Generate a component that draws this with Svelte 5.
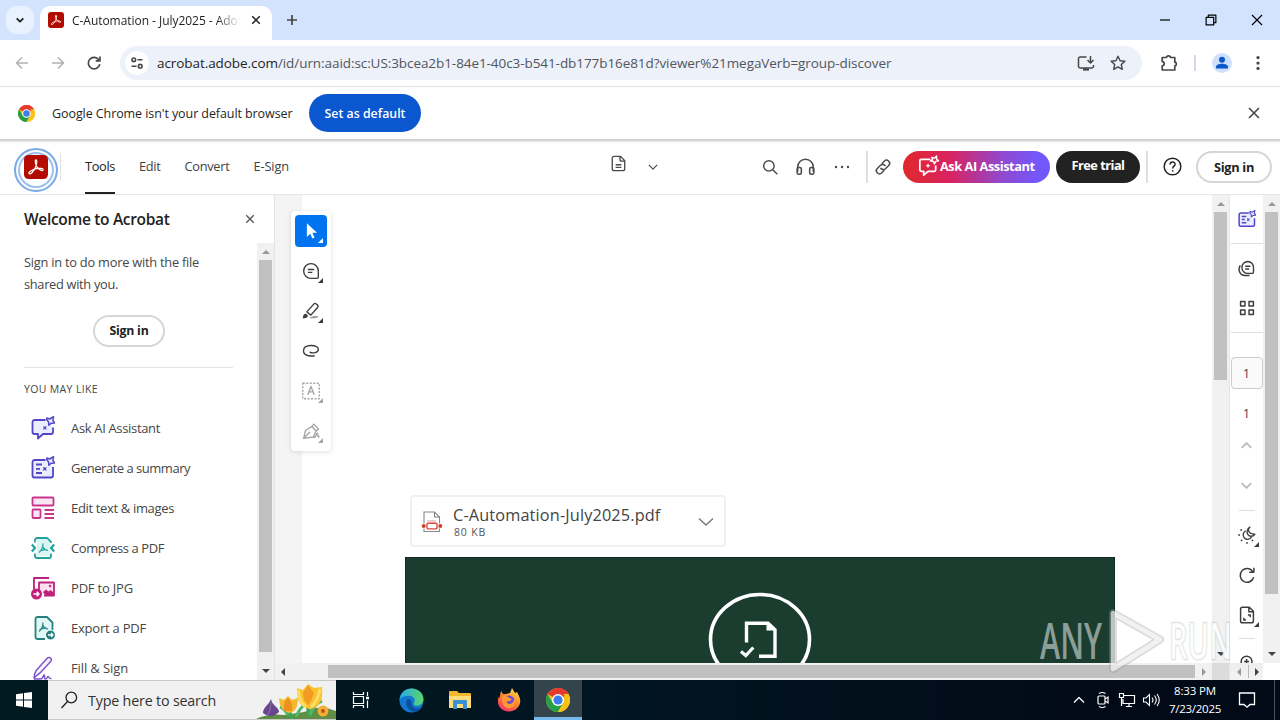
<script>
  // Tunes letter spacing so a label occupies the given width in pixels.
  function fit(node, width) {
    const natural = node.getBoundingClientRect().width;
    const count = [...node.textContent].length;
    node.style.letterSpacing = (width - natural) / count + 'px';
  }

  const chromeLogo =
    '<circle cx="12" cy="12" r="12" fill="#fbc116"/><path d="M12 12L1.6 6A12 12 0 0 1 22.4 6z" fill="#e33b2e"/><path d="M12 0a12 12 0 0 1 10.4 6H12z" fill="#e33b2e"/><path d="M1.6 6A12 12 0 0 0 12 24l5.2-9L12 12 6.8 15z" fill="#269f4b"/><path d="M12 24l5.2-9a6 6 0 0 0 0-9h5.2A12 12 0 0 1 12 24z" fill="#fbc116"/><circle cx="12" cy="12" r="6" fill="#fff"/><circle cx="12" cy="12" r="4.6" fill="#3b7ded"/>';
  const acrobat =
    '<rect width="24" height="24" rx="4.5" fill="#b30b00"/><path d="M5 18.5c-.8-1.5 4-4.200 7.500-4.800 3-.6 6.800-.5 6.600 1.200-.3 1.600-4-.2-6-2.800-1.500-2-2.600-6.600-1.300-7.200 1.500-.5 1.200 4-.5 7.800C9.500 16.500 6.200 20.300 5 18.500z" fill="none" stroke="#fff" stroke-width="1.250"/>';

  const icons = {
    chevDown: '<path d="M7 9.500l5 5 5-5"/>',
    chevUp: '<path d="M7 14.500l5-5 5 5"/>',
    close: '<path d="M7 7l10 10M17 7L7 17"/>',
    plus: '<path d="M12 7v10M7 12h10"/>',
    back: '<path d="M18 12H6.500M12 6.500L6.500 12l5.500 5.500"/>',
    fwd: '<path d="M6 12h11.500M12 6.500l5.500 5.500-5.500 5.500"/>',
    reload: '<path d="M17 9a5.800 5.800 0 1 0 .8 4.200"/><path d="M18 5.500v4.300h-4.300"/>',
    tune: '<circle cx="8.500" cy="8.500" r="2"/><path d="M12.500 8.500H18M6 15.500h5.500"/><circle cx="15.500" cy="15.500" r="2"/>',
    install: '<path d="M12.500 6H6.200A1.700 1.700 0 0 0 4.500 7.700v7.600A1.700 1.700 0 0 0 6.200 17h11.600a1.700 1.700 0 0 0 1.700-1.700V14M16.500 5v6.500M13.500 9l3 3 3-3"/><path d="M9 18.500h6" stroke-width="2.200"/>',
    starline: '<path d="M12 5.200l2.100 4.500 4.800.5-3.600 3.300 1 4.900-4.300-2.500-4.300 2.500 1-4.900-3.600-3.300 4.800-.5z"/>',
    puzzle: '<path d="M5.200 6.500h4.300c0-2.200 4-2.200 4 0h4.300v4.700c2 0 2 3.600 0 3.600v4.200H5.200v-4.200c2.700-.3 2.700-3.800 0-4.100z"/>',
    kebab: '<g fill="currentColor" stroke="none"><circle cx="12" cy="7" r="1.500"/><circle cx="12" cy="12" r="1.500"/><circle cx="12" cy="17" r="1.500"/></g>',
    dots: '<g fill="currentColor" stroke="none"><circle cx="6" cy="12" r="1.200"/><circle cx="12" cy="12" r="1.200"/><circle cx="18" cy="12" r="1.200"/></g>',
    min: '<path d="M7 12h10"/>',
    restore: '<path d="M7.500 9.500h7v7h-7zM9.500 9.500v-2h7v7h-2"/>',
    doc: '<path d="M7.500 4.500h6.500l4.500 4.500v8.500a2 2 0 0 1-2 2h-9a2 2 0 0 1-2-2v-11a2 2 0 0 1 2-2zM13.500 4.500v3a2 2 0 0 0 2 2h3M9 13.300h6M9 16h6"/>',
    search: '<circle cx="10.800" cy="10.800" r="5.700"/><path d="M15 15l5 5"/>',
    phones: '<path d="M4.500 17v-4.500a7.500 7.500 0 0 1 15 0V17"/><rect x="4" y="13" width="4" height="6.500" rx="1.500"/><rect x="16" y="13" width="4" height="6.500" rx="1.500"/>',
    link: '<g transform="rotate(-45 12 12)"><path d="M10.500 15.500H6.500a3.400 3.400 0 0 1 0-6.800h5a3.400 3.400 0 0 1 3 4.500M13.500 8.500H17.500a3.400 3.400 0 0 1 0 6.800h-5a3.400 3.400 0 0 1-3-4.500"/></g>',
    help: '<circle cx="12" cy="12" r="8"/><path d="M9.700 10c0-3.200 4.800-3.100 4.800-.2 0 1.900-2.300 1.900-2.300 4"/><circle cx="12.200" cy="16.200" r=".8" fill="currentColor" stroke="none"/>',
    aiWhite: '<path d="M14 4.500H4.500A1.500 1.500 0 0 0 3 6v9.500A1.500 1.500 0 0 0 4.500 17H7v4l4.500-4h6.500a1.500 1.500 0 0 0 1.500-1.500V11"/><path d="M15.500 2.500l2.500.8L20.500 1l-.2 3.200 2.200 1.800-3 .7-1.300 2.600-1.200-2.700-3-.3 2.200-1.600z" stroke-width="1.500"/><path d="M11.500 8.700l.8 1.700 1.700.8-1.700.8-.8 1.700-.8-1.700-1.700-.8 1.700-.8z" fill="currentColor" stroke="none"/>',
    ai: '<path d="M14.500 4H3.500A2 2 0 0 0 1.500 6v10a2 2 0 0 0 2 2H7v4.500L12 18h8a2 2 0 0 0 2-2v-4.500" fill="#ececff"/><path d="M16 2l2.600 1L22.500.700l-.6 3.800 2 2.500-3.500.2-2.600 2-.2-3.200-2-2.500z" fill="#ececff" stroke-width="1.500"/><path d="M12.300 10l1.700.8 1.700-.8-.7 1.900.7 1.800-1.800-.7-1.900.7.7-1.900z" fill="currentColor" stroke="none"/>',
    summary: '<path d="M14.500 4H3.500A2 2 0 0 0 1.500 6v13.500a2 2 0 0 0 2 2H20a2 2 0 0 0 2-2V11" fill="#ececff"/><path d="M16 2l2.600 1L22.500.700l-.6 3.800 2 2.500-3.500.2-2.600 2-.2-3.200-2-2.500z" fill="#ececff" stroke-width="1.500"/><path d="M5 8.500h6M5 12.800h4M5 17h6"/><path d="M12 10.800l1.900.9 1.800-.9-.7 2.100.7 2-1.900-.8-2.100.8.8-2z" fill="currentColor" stroke="none"/>',
    edit: '<g fill="#fce6f3"><rect x="1.500" y="1.500" width="21" height="8" rx="1"/><rect x="1.500" y="13.500" width="8" height="8.500" rx="1"/></g><path d="M13.500 14h9.500M13.500 18h9.500M13.500 22h9.500"/>',
    compress: '<path d="M4 6.500V4A2.500 2.500 0 0 1 6.500 2H16l4 4v1M4 17.500V20a2 2 0 0 0 2 2h12a2 2 0 0 0 2-2v-2.500"/><path d="M6 3h10l3 4v13H6z" fill="#daf6f3" stroke="none"/><path d="M.8 8.500L4 12 .8 15.500M23.200 8.500L20 12l3.200 3.500" stroke-width="2.200"/><path d="M8 16.500c2.500-2 4-5 4-9M12 11c.8 2 2.500 3.200 5 3.500M8.500 15.500c2-1.500 5-2.300 8-1.500" stroke-width="1.200"/>',
    jpg: '<path d="M3 14V2h15"/><path d="M8 15V6.500h15v13H13" fill="#fce0f1"/><path d="M12 16l3-2.500 2.500 2 2-1.500 3 2.500v3h-8z" fill="currentColor" stroke="none"/><circle cx="19" cy="10" r="1.200" fill="currentColor" stroke="none"/><circle cx="5.500" cy="18" r="5.500" fill="currentColor" stroke="none"/><path d="M2.500 18h5M5.700 15.700L8 18l-2.300 2.300" stroke="#fff" stroke-width="1.500"/>',
    export: '<path d="M14 23H6.500a2 2 0 0 1-2-2V3a2 2 0 0 1 2-2H16l5.500 5.500V14" fill="#e0f7f6"/><path d="M8 15.500c2.500-2 4-5 4-9M12 9.500c.8 2 2.500 3.200 5 3.500M8.500 14c2-1.500 5-2.300 8-1.500" stroke-width="1.200"/><circle cx="19.500" cy="19" r="5" fill="currentColor" stroke="#fff" stroke-width="1"/><path d="M17 19h4.500M20 17l2 2-2 2" stroke="#fff" stroke-width="1.300"/>',
    sign: '<g stroke-width="1.400"><path d="M3 22c.4-4 1.200-6.500 3-8.500L16 2.500c1-1.200 2.600-1.200 3.500-.4 1 .9 1.200 2.300.2 3.500L9.500 16.500C8 18.200 5 19.500 3 22z" fill="#f6f2ff"/><path d="M3 23h6c4 0 2.500-4 4-4s-.5 4 1.500 4 1.500-2.500 2.500-2.500.5 2.500 3.500 2"/></g>',
    cursor: '<path d="M7.500 3.500v15l3.700-3.600 2.300 5.400 2.400-1-2.300-5.300h5z" fill="#fff" stroke="none"/>',
    comment: '<path d="M12 4a8 8 0 1 0 0 16h6.500a1.500 1.500 0 0 0 1.500-1.500V12a8 8 0 0 0-8-8zM8.500 10.300h7M8.500 13.500h5"/>',
    pen: '<path d="M7.500 13L15 4.500c.8-.9 2-.9 2.800-.2l1.200 1c.9.8 1 2 .2 2.900L11.800 16.500z"/><path d="M3 20c.2-2.600.8-4.300 2.500-5 2 .1 3.200 1.400 3 3-1.200 1.700-3.200 2-5.500 2z" fill="currentColor" stroke="none"/><path d="M10 19.500c4-2.200 8-2.500 10.500-1.500-1.500 2-6.500 2.300-10.500 1.500z" fill="#9a9a9a" stroke="none"/>',
    lasso: '<path d="M4 11C4 4.500 20 4.500 20 10c0 4-6 5-9.500 3.200M4 11c-1 4.500 4 7.300 12 6.200"/>',
    textbox: '<rect x="3" y="3.500" width="18" height="17" stroke-dasharray="2.200 1.600"/><path d="M8.500 16L12 7l3.500 9M9.800 13h4.400"/>',
    fountain: '<path d="M4 20l2-8.500 7-4.500 4.500 5-3 6.500zM4 20l7-7M13 7l2.200-2.500 5 5.500-2.700 2M15 19c2.500 1 2.500-5 4-4.500s-1 5 2.500 3.500"/>',
    comments: '<path d="M13.500 4a6.800 6.800 0 1 0 0 13.600h5.300a1.200 1.200 0 0 0 1.200-1.200V10.800A6.700 6.700 0 0 0 13.500 4zM10.500 9.500h6M10.500 12.500h4.500M4.800 8.500c-3.300 5.500 0 11.500 5.200 11.500h5.500"/>',
    grid: '<rect x="5" y="5" width="4.800" height="4.800"/><rect x="14.200" y="5" width="4.800" height="4.800"/><rect x="5" y="14.200" width="4.800" height="4.800"/><rect x="14.200" y="14.200" width="4.800" height="4.800"/>',
    sun: '<path d="M10.500 7A5.300 5.300 0 1 0 17.500 14M15.500 2.500c-3.500 2.500-2 9 6 8.500-1.600 3-6.500 3.400-8.400.5C11 8.500 12.500 4 15.500 2.500z"/><g fill="currentColor" stroke="none"><circle cx="2.500" cy="12" r="1.100"/><circle cx="5" cy="6" r="1.100"/><circle cx="5.500" cy="18.500" r="1.100"/><circle cx="12" cy="21.500" r="1.100"/><circle cx="18.500" cy="18.500" r="1.100"/></g>',
    rotate: '<path d="M18.500 8.500a7.500 7.500 0 1 0 .8 6M19.500 4v5h-5"/>',
    page: '<path d="M7 3.500h7.500L19 8v10.500a2 2 0 0 1-2 2H7a2 2 0 0 1-2-2v-13a2 2 0 0 1 2-2zM14 3.500V8.500h5M13 12h2.500v2.500M11 17.500H8.500V15"/>',
    zoomin: '<circle cx="11.500" cy="11.500" r="6.500"/><path d="M8.500 11.500h6M11.500 8.500v6M16 16l4 4"/>'
  };

  const suggestions = [
    ['ai', 'Ask AI Assistant', 89, '#5146c8'],
    ['summary', 'Generate a summary', 119, '#5146c8'],
    ['edit', 'Edit text & images', 103, '#c9348d'],
    ['compress', 'Compress a PDF', 93, '#1fa39d'],
    ['jpg', 'PDF to JPG', 62, '#bf227a'],
    ['export', 'Export a PDF', 75, '#26807f'],
    ['sign', 'Fill & Sign', 57, '#7a52c8']
  ];
  const tools = [
    ['cursor', true, ''],
    ['comment', true, ''],
    ['pen', true, ''],
    ['lasso', false, ''],
    ['textbox', true, 'off'],
    ['fountain', true, 'off']
  ];
  const menu = [['Tools', 30], ['Edit', 21.500], ['Convert', 45], ['E-Sign', 35.500]];
</script>

{#snippet icon(name, size = 24, stroke = 1.5)}
  <svg width={size} height={size} viewBox="0 0 24 24" fill="none" stroke="currentColor" stroke-width={stroke} stroke-linejoin="round">{@html icons[name]}</svg>
{/snippet}

{#snippet logo(art, size)}
  <svg width={size} height={size} viewBox="0 0 24 24">{@html art}</svg>
{/snippet}

{#snippet arrow(dir, dim = false)}
  <i class="arrow {dir}" class:dim></i>
{/snippet}

<div class="screen">
  <div class="tabs">
    <div class="tabsearch">{@render icon('chevDown', 16, 2.600)}</div>
    <div class="tab">
      {@render logo(acrobat, 16)}
      <span class="tabtitle"><span use:fit={173}>C-Automation - July2025 - Adob</span></span>
      <span class="c">{@render icon('close', 18, 2)}</span>
    </div>
    <span class="plus">{@render icon('plus', 24, 1.700)}</span>
    <div class="winbtns">
      <span>{@render icon('min', 24, 1.200)}</span>
      <span>{@render icon('restore', 26, 1.100)}</span>
      <span>{@render icon('close', 24, 1.200)}</span>
    </div>
  </div>

  <div class="toolbar">
    <div class="nav">
      <span class="faded">{@render icon('back')}</span>
      <span class="faded">{@render icon('fwd')}</span>
      <span>{@render icon('reload', 24, 1.700)}</span>
    </div>
    <div class="omni">
      <span class="site">{@render icon('tune', 22, 1.700)}</span>
      <span class="url" use:fit={734.500}>acrobat.adobe.com<em>/id/urn:aaid:sc:US:3bcea2b1-84e1-40c3-b541-db177b16e81d?viewer%21megaVerb=group-discover</em></span>
      <span class="omniicons">{@render icon('install')}{@render icon('starline', 24, 1.400)}</span>
    </div>
    <span class="puz">{@render icon('puzzle', 24, 1.700)}</span>
    <span class="sep"></span>
    <span class="avatar"><svg width="20" height="20" viewBox="0 0 20 20"><circle cx="10" cy="6.700" r="3" fill="#0b57d0" /><path d="M4 15.500v-1.500c0-4.200 12-4.200 12 0v1.500z" fill="#0b57d0" /></svg></span>
    <span class="keb">{@render icon('kebab', 26)}</span>
  </div>

  <div class="infobar">
    {@render logo(chromeLogo, 17)}
    <span class="infotext" use:fit={240.500}>Google Chrome isn't your default browser</span>
    <button class="default"><span use:fit={81}>Set as default</span></button>
    <span class="infoclose">{@render icon('close', 24, 1.600)}</span>
  </div>

  <header>
    <div class="ring">{@render logo(acrobat, 24)}</div>
    <i class="ringline"></i>
    <nav>
      {#each menu as [label, w], i}
        <span class="menuitem" class:active={i === 0} style="width:{w}px"><b use:fit={w}>{label}</b></span>
      {/each}
    </nav>
    <span class="docicon">{@render icon('doc', 23, 1.400)}</span>
    <span class="docchev">{@render icon('chevDown', 20, 1.500)}</span>
    <div class="acts">
      {@render icon('search', 22, 1.600)}
      {@render icon('phones', 25, 1.500)}
      {@render icon('dots', 24)}
    </div>
    <span class="vline"></span>
    <span class="linkicon">{@render icon('link', 22, 1.600)}</span>
    <button class="aibtn">{@render icon('aiWhite', 23, 1.800)}<span use:fit={94.500}>Ask AI Assistant</span></button>
    <button class="trial"><span use:fit={53}>Free trial</span></button>
    <span class="vline v2"></span>
    <span class="help">{@render icon('help', 25, 1.400)}</span>
    <button class="signin"><span use:fit={40}>Sign in</span></button>
  </header>

  <main>
    <aside>
      <div class="asidehead"><h2 use:fit={145.500}>Welcome to Acrobat</h2>{@render icon('close', 18, 1.800)}</div>
      <div class="asiderow">
        <div class="asidebody">
          <p><span use:fit={175}>Sign in to do more with the file</span><br /><span use:fit={94}>shared with you.</span></p>
          <button class="signin small"><span use:fit={39}>Sign in</span></button>
          <hr />
          <h3><span use:fit={74}>YOU MAY LIKE</span></h3>
          {#each suggestions as [name, label, w, color]}
            <div class="sug"><span class="sugicon" style="color:{color}">{@render icon(name, 24, 1.800)}</span><span class="suglabel" use:fit={w}>{label}</span></div>
          {/each}
        </div>
        <div class="vbar">{@render arrow('up', true)}<i class="thumb a"></i>{@render arrow('down')}</div>
      </div>
    </aside>

    <section class="viewer">
      <div class="docrow">
        <div class="canvas">
          <div class="paper">
            <div class="attach">
              <svg class="file" width="22" height="24" viewBox="0 0 22 24" fill="none"><path d="M3 21.500V2h10.500l5 5v14.500z" stroke="#888" stroke-width="1.100" /><path d="M13.500 2v5h5" stroke="#777" /><path d="M6 11h9" stroke="#e29c93" /><rect x="1.500" y="13.500" width="19" height="5" fill="#fff" /><rect x="6" y="13.300" width="10" height="5.600" rx="1" stroke="#d64b38" stroke-width="1.400" /><circle cx="2.700" cy="16" r="2" fill="#cf3f2c" /><circle cx="19.300" cy="16" r="2" fill="#cf3f2c" /></svg>
              <div class="names"><span class="fname"><span use:fit={207.500}>C-Automation-July2025.pdf</span></span><span class="fsize"><span use:fit={32}>80 KB</span></span></div>
              <svg class="drop" width="18" height="12" viewBox="0 0 18 12" fill="none" stroke="#777" stroke-width="1.400"><path d="M2 2.500l7 6.500 7-6.500" /></svg>
            </div>
            <div class="banner">
              <svg width="104" height="72" viewBox="0 0 104 72" fill="none" stroke="#fff"><ellipse cx="52" cy="47.500" rx="49.500" ry="45" stroke-width="3.600" /><path d="M38.500 50.500V31.200h21.500l7 6.500v26.600H51" stroke-width="3.400" /><path d="M58.500 30v8.500H68z" fill="#fff" stroke="none" /><path d="M33 59.500l4.800 4 7.500-8" stroke-width="3.200" /></svg>
            </div>
          </div>
        </div>
        <div class="vbar">{@render arrow('up', true)}<i class="thumb b"></i>{@render arrow('down')}</div>
      </div>
      <div class="hbar">{@render arrow('left')}<i class="hthumb"></i>{@render arrow('right', true)}</div>
      <div class="palette">
        {#each tools as [name, corner, cls], i}
          <span class="tool {cls}" class:on={i === 0}>{@render icon(name, 22, 1.500)}{#if corner}<i class="corner"></i>{/if}</span>
        {/each}
      </div>
    </section>

    <div class="side">
      <div class="rail">
        <span class="cell first" style="color:#5146c8">{@render icon('summary', 18, 2)}</span>
        <hr />
        <span class="cell c2">{@render icon('comments', 21, 1.600)}</span>
        <span class="cell c3">{@render icon('grid', 22, 1.600)}</span>
        <hr />
        <span class="pagebox">1</span>
        <span class="pagenum">1</span>
        <span class="cell light">{@render icon('chevUp', 23, 2)}</span>
        <span class="cell light">{@render icon('chevDown', 23, 2)}</span>
        <hr class="short" />
        <span class="cell c4">{@render icon('sun', 20, 1.600)}<i class="corner"></i></span>
        <span class="cell">{@render icon('rotate', 22, 1.600)}</span>
        <span class="cell">{@render icon('page', 22, 1.600)}<i class="corner"></i></span>
        <hr class="short s2" />
        <span class="cell last">{@render icon('zoomin', 20, 1.800)}</span>
      </div>
      <div class="minibar">{@render arrow('left', true)}<i class="tick"></i>{@render arrow('right')}</div>
    </div>
    <div class="vbar outer">{@render arrow('up', true)}<i class="thumb o"></i>{@render arrow('down')}</div>
  </main>

  <footer>
    <span class="start"><svg width="16" height="16" viewBox="0 0 16 16" fill="#fff"><path d="M0 2.300l7-1v6.200H0zM8 1.100L16 0v7.500H8zM0 8.500h7v6.200l-7-1zM8 8.500h8V16l-8-1.100z" /></svg></span>
    <div class="search">
      <svg width="18" height="18" viewBox="0 0 18 18" fill="none" stroke="#222" stroke-width="1.300"><circle cx="11.300" cy="6.500" r="5.300" /><path d="M7.500 10.500L1.500 17" /></svg>
      <span class="hint" use:fit={128}>Type here to search</span>
      <svg class="flowers" width="80" height="38" viewBox="0 0 80 38">
        <path d="M0 38q12-6 28-4l20-3 12-4q10-1 20 3v8z" fill="#5f8d43" />
        <path d="M36 38L32 28M54 36L51 22" stroke="#3aa657" stroke-width="4" />
        <path d="M40 36q4-10 10-13M54 34q4-11 12-14M32 34q-4-7-8-8" stroke="#4fb767" stroke-width="3" fill="none" />
        <path d="M15 18c1 7 8 8 8 13q-8 8-16 1c0-6 6-8 8-14z" fill="#68478d" /><path d="M15 21q0 9-4 14" stroke="#8d70b0" fill="none" />
        <path d="M23 17l5 2 4-4 4 4 6-2q0 14-9 15-10-3-10-15z" fill="#f6b92b" /><path d="M28 30q-1-10 4-13 5 4 4 13z" fill="#ec9120" />
        <path d="M41 7l6 2 5-6 6 4 8-1q2 20-12 22Q40 26 41 7z" fill="#fcc22d" /><path d="M47 12l5-8 6 8-3 8-3 4-4-5z" fill="#f09b22" /><path d="M42 9q2 13 8 17M64 8q-2 12-9 18" stroke="#ffdc65" stroke-width="3" fill="none" />
        <circle cx="67" cy="30" r="5.500" fill="#f3ae35" /><circle cx="67" cy="30" r="2" fill="#b7541b" />
      </svg>
    </div>
    <div class="apps">
      <span><svg width="18" height="18" viewBox="0 0 18 18" fill="none" stroke="#fff" stroke-width="1.200"><path d="M1.500 1v2.500h10V1M1.500 17v-2.500h10V17M1.500 5.500h10v7h-10zM15.500 1v4M15.500 9.500V17" /><path d="M14 7h3" stroke-width="2.500" /></svg></span>
      <span class="edge">
        <svg width="25" height="25" viewBox="0 0 24 24"><defs><linearGradient id="eg" x1="0" x2="1"><stop offset="0" stop-color="#27a9e8" /><stop offset="1" stop-color="#5bd56b" /></linearGradient></defs><circle cx="12" cy="12" r="11.500" fill="#1177cf" /><path d="M.5 12C.500 5 6 .5 12 .5c7 0 11.500 5 11.500 10 0 4-3 6.500-6.500 6.500-3 0-3.500-1.500-2.500-3 2-3-1-6.500-5-6.500S1 9 .5 12z" fill="url(#eg)" /><path d="M8 11c-3 5 1 12 8 11.800 2.500-.2 5-2 6-4-4 2-10 1-10-5-.5-3-2.500-4-4-2.800z" fill="#0b4e9e" /></svg>
      </span>
      <span><svg width="22" height="20" viewBox="0 0 22 20"><path d="M0 2q0-1 1-1h7l2 2h11q1 0 1 1v14H0z" fill="#f2b62f" /><path d="M0 6h22v12H0z" fill="#ffdc7c" /><path d="M4 19v-8q0-1 1-1h12q1 0 1 1v8h-4v-5H8v5z" fill="#3c91d5" /></svg></span>
      <span><svg width="24" height="24" viewBox="0 0 24 24"><defs><linearGradient id="fg" x1=".8" y1="0" x2=".2" y2="1"><stop offset="0" stop-color="#ffe14a" /><stop offset=".45" stop-color="#ff8b2b" /><stop offset="1" stop-color="#f52c6b" /></linearGradient></defs><path d="M4 3l2 3 3 0 4-1 2-5 3 5 2-1 2 4c4 8-2 15.500-10 15.500S-1 17 1.500 9l1 1z" fill="url(#fg)" /><circle cx="12" cy="13" r="5.500" fill="#6f4bd6" /><path d="M5 9c3-2 6-1 7 1l3 1q-2 3-5 2-1 3 3 3 4-1 4-5 3 5-1 8-5 3-9-1-2-3-2-9z" fill="#ff9a31" /></svg></span>
      <span class="running">{@render logo(chromeLogo, 24)}</span>
    </div>
    <div class="tray">
      <span>{@render icon('chevUp', 24, 1.300)}</span>
      <span><svg width="16" height="18" viewBox="0 0 16 18" fill="none" stroke="#fff" stroke-width="1.200"><rect x="3" y="5" width="7" height="8" rx="1" /><path d="M10 8l3-2v6l-3-2M4 2.500q3-2 6.500 0M4 15.500q3 2 6.500 0" /></svg></span>
      <span><svg width="18" height="16" viewBox="0 0 18 16" fill="none" stroke="#fff" stroke-width="1.200"><path d="M6 3.500h10.500v8H5V7M8 14.500h6M11 11.500v3M1.500 1.500h4V5.500h-4zM3.500 5.500V14" /></svg></span>
      <span><svg width="18" height="16" viewBox="0 0 18 16" fill="none" stroke="#fff" stroke-width="1.100"><path d="M1.500 6h2.500l3.500-3.500v11L4 10H1.500zM10 5.500q2 2.500 0 5M12.500 3.500q3.500 4.500 0 9M15 2q4.500 6 0 12" /></svg></span>
    </div>
    <div class="clock"><span use:fit={42}>8:33 PM</span><span use:fit={52}>7/23/2025</span></div>
    <span class="note"><svg width="18" height="18" viewBox="0 0 18 18" fill="none" stroke="#fff" stroke-width="1.300"><path d="M1.500 2h15v11.500H12L9 16.200 6 13.500H1.500z" /></svg></span>
    <i class="peek"></i>
  </footer>

  <svg class="mark" width="204" height="72" viewBox="0 0 204 72">
    <g class="marktext">
      <text x="3" y="54" textLength="62" lengthAdjust="spacingAndGlyphs" fill="#fff" fill-opacity=".5">ANY</text>
      <text x="132" y="54" textLength="63" lengthAdjust="spacingAndGlyphs" fill="#fff" fill-opacity=".75" stroke="#aaa" stroke-opacity=".35" stroke-width="2.500" paint-order="stroke">RUN</text>
    </g>
    <g fill="none" stroke-linejoin="round">
      <path d="M76 8l47 26.500L76 64z" stroke="#999" stroke-opacity=".35" stroke-width="8" />
      <path d="M76 8l47 26.500L76 64z" stroke="#fff" stroke-opacity=".65" stroke-width="4.500" />
    </g>
  </svg>
</div>

<style>
  :global(body) { margin: 0; }
  * { box-sizing: border-box; }
  svg { display: block; flex: none; }
  em { font-style: normal; }
  button { font: inherit; border: 0; padding: 0; margin: 0; display: flex; align-items: center; justify-content: center; white-space: nowrap; flex: none; }
  .screen { position: relative; width: 1280px; height: 720px; overflow: hidden; display: flex; flex-direction: column; background: #fff; font-family: "Open Sans", "Noto Sans", sans-serif; font-size: 12.500px; color: #1f1f1f; white-space: nowrap; }

  .tabs { height: 40px; flex: none; background: #d3e3fd; display: flex; padding: 6px 0 0 6px; color: #1f1f1f; }
  .tabsearch { width: 28px; height: 28px; border-radius: 10px; background: #e9f1fe; display: grid; place-items: center; }
  .tab { width: 232px; margin-left: 6px; border-radius: 10px 10px 0 0; background: #fff; display: flex; align-items: center; padding: 0 6px 6px 8px; }
  .tabtitle { width: 168px; margin-left: 8px; overflow: hidden; font-size: 12px; -webkit-mask-image: linear-gradient(90deg, #000 86%, transparent); }
  .c { margin-left: 7px; }
  .plus { margin: 2px 0 0 8px; color: #444; }
  .winbtns { margin-left: auto; display: flex; height: 28px; }
  .winbtns span { width: 46px; display: grid; place-items: center; color: #000; }

  .toolbar { height: 47px; flex: none; display: flex; align-items: center; border-bottom: 1px solid #dcdfe3; color: #474747; }
  .nav { width: 120px; display: flex; gap: 12px; padding-left: 10px; }
  .faded { color: #b1b1b1; }
  .omni { width: 1022px; height: 34px; border-radius: 17px; background: #edf1fa; display: flex; align-items: center; padding-left: 5px; }
  .site { width: 24px; height: 24px; border-radius: 50%; background: #fff; display: grid; place-items: center; margin-right: 8px; }
  .url { font-size: 13.500px; color: #1f1f1f; }
  .url em { color: #52565c; }
  .omniicons { margin: 0 12px 0 auto; display: flex; gap: 8px; }
  .puz { margin-left: 15px; }
  .sep { width: 2px; height: 16px; background: #d3dbe8; margin-left: 13px; }
  .avatar { width: 20px; height: 20px; border-radius: 50%; background: #cfe0fc; margin-left: 16px; }
  .keb { margin-left: 13px; }

  .infobar { height: 52px; flex: none; display: flex; align-items: center; padding-left: 17.500px; }
  .infotext { margin-left: 17.500px; font-size: 12.500px; }
  .default { width: 112px; height: 38px; border-radius: 19px; background: #0b57d0; color: #fff; margin-left: 16.500px; font-weight: 600; font-size: 12.300px; }
  .infoclose { margin: 0 14px 0 auto; color: #474747; }

  header { height: 56px; flex: none; display: flex; align-items: center; border-bottom: 1px solid #e6e6e6; color: #4b4b4b; background: linear-gradient(#cfcfcf, #d8d8d8 2px, #f6f6f6 3px, #fff 5px); }
  .ring { width: 44px; height: 44px; border: 2px solid #79a9e8; border-radius: 50%; margin: 6px 0 0 14px; box-shadow: inset 0 0 0 2px #fff, inset 0 0 0 4px #9cc0f0; display: flex; justify-content: center; padding-top: 5px; }
  .ringline { width: 1px; height: 28px; background: #e3e3e3; margin-left: 2px; }
  nav { display: flex; gap: 24px; margin-left: 24px; height: 55px; width: 205px; }
  .menuitem { flex: none; height: 55px; padding-top: 18px; font-size: 12.800px; color: #3f3f3f; }
  .menuitem b { font-weight: 400; }
  .active { border-bottom: 2px solid #222; color: #222; }
  .docicon { margin: -6px 0 0 316.500px; }
  .docchev { margin-left: 13.500px; }
  .acts { display: flex; align-items: center; margin-left: 96px; gap: 12px; }
  .vline { width: 2px; height: 32px; background: #e0e0e0; margin-left: 12px; }
  .linkicon { margin-left: 4px; }
  .aibtn { width: 147px; height: 32px; border-radius: 16px; margin-left: 9px; color: #fff; font-weight: 700; font-size: 12.800px; background: linear-gradient(90deg, #e1282b, #d92361 32%, #8f49cf 68%, #7357fb 92%); justify-content: flex-start; padding: 0 0 1px 14px; }
  .trial { width: 84px; height: 32px; border-radius: 16px; background: #222; color: #fff; font-weight: 700; font-size: 12.800px; margin-left: 6px; padding-bottom: 3px; }
  .v2 { margin-left: 6px; }
  .help { margin-left: 12px; color: #222; }
  .signin { width: 76px; height: 32px; border: 2px solid #d5d5d5; border-radius: 16px; margin-left: 11px; background: #fff; color: #222; font-weight: 700; font-size: 12.800px; }

  main { flex: 1; display: flex; min-height: 0; }
  aside { width: 275px; border-right: 1px solid #e4e4e4; display: flex; flex-direction: column; }
  .asidehead { height: 48px; display: flex; align-items: center; justify-content: space-between; padding: 0 15px 0 24px; color: #555; flex: none; }
  h2 { margin: 0; font-size: 15.500px; font-weight: 600; color: #222; }
  .asiderow { display: flex; flex: 1; min-height: 0; }
  .asidebody { width: 257px; overflow: hidden; padding-left: 24px; color: #464646; }
  p { margin: 8px 0 20px; line-height: 22px; font-size: 12.800px; }
  .small { width: 72px; margin: 0 0 0 69px; font-size: 12.300px; padding-bottom: 2px; }
  .asidebody hr { width: 209px; border: 0; height: 1px; background: #e3e3e3; margin: 20px 0 0; }
  h3 { margin: 12px 0 9px; height: 19px; line-height: 19px; font-weight: 400; font-size: 10.500px; }
  .sug { height: 40px; display: flex; align-items: center; padding-left: 7px; }
  .suglabel { margin-left: 16px; font-size: 13px; }

  .vbar { width: 17px; flex: none; background: #f1f1f1; display: flex; flex-direction: column; align-items: center; justify-content: space-between; padding: 7px 0; }
  .vbar .thumb { width: 13px; background: #c1c1c1; margin-bottom: auto; }
  .thumb.a { height: 392px; margin-top: 6px; }
  .thumb.b { height: 168px; margin-top: 6px; }
  .thumb.o { height: 382px; margin-top: 6px; }
  .outer { width: 17px; height: 468px; }
  .arrow { width: 0; height: 0; border: 4px solid transparent; flex: none; }
  .arrow.up { border-top: 0; border-bottom: 4px solid #444; }
  .arrow.down { border-bottom: 0; border-top: 4px solid #444; }
  .arrow.left { border-left: 0; border-right: 4px solid #444; }
  .arrow.right { border-right: 0; border-left: 4px solid #444; }
  .arrow.up.dim { border-bottom-color: #999; }
  .arrow.left.dim { border-right-color: #999; }
  .arrow.right.dim { border-left-color: #999; }

  .viewer { width: 954px; flex: none; position: relative; display: flex; flex-direction: column; }
  .docrow { flex: 1; display: flex; min-height: 0; }
  .canvas { width: 937px; background: #f4f4f4; padding-left: 27px; }
  .paper { background: #fff; height: 468px; padding: 300px 0 0 103px; overflow: hidden; }
  .attach { width: 316px; height: 52px; margin-left: 5px; border: 2px solid #f1f1f1; border-radius: 4px; display: flex; align-items: center; padding: 2px 9px 0; }
  .names { margin-left: 10px; display: flex; flex-direction: column; color: #444; width: 208px; }
  .fname { font-size: 16.300px; line-height: 20px; }
  .fsize { font-size: 10.500px; line-height: 13px; padding: 1px 0 0 1px; color: #555; }
  .drop { margin-left: auto; }
  .banner { width: 710px; height: 110px; margin-top: 10px; background: #1a3d2f; border: 1px solid #10291f; padding: 34px 0 0 302px; }
  .hbar { height: 17px; flex: none; background: linear-gradient(90deg, #f1f1f1 937px, #dcdcdc 937px); display: flex; align-items: center; padding-left: 6px; }
  .hthumb { width: 867px; height: 13px; background: #c1c1c1; margin: 0 7px 0 43px; }
  .palette { position: absolute; left: 16px; top: 16px; width: 40px; height: 240px; background: #fff; border-radius: 4px; box-shadow: 0 1px 5px #0002; padding: 4px; display: flex; flex-direction: column; gap: 8px; color: #3c3c3c; }
  .tool { width: 32px; height: 32px; border-radius: 4px; display: grid; place-items: center; position: relative; }
  .on { background: #0073f0; color: #fff; }
  .off { color: #a5a5a5; }
  .corner { position: absolute; right: 4px; bottom: 4px; border: 2.500px solid currentColor; border-width: 0 0 5px 5px; border-left-color: transparent; }

  .side { width: 34px; flex: none; border-left: 1px solid #e6e6e6; display: flex; flex-direction: column; }
  .rail { height: 468px; overflow: hidden; color: #3c3c3c; display: flex; flex-direction: column; align-items: center; }
  .cell { height: 40px; width: 32px; display: grid; place-items: center; position: relative; flex: none; }
  .first { height: 48px; }
  .rail hr { width: 32px; height: 1px; border: 0; background: #dedede; margin: 0; flex: none; }
  .c2 { margin-top: 4px; }
  .c3 { height: 44px; padding-bottom: 4px; }
  .pagebox { width: 32px; height: 32px; border: 1px solid #ccc; border-radius: 4px; background: #fafafa; margin-top: 24px; flex: none; display: grid; place-items: center; font-size: 12px; padding-top: 1px; }
  .pagenum { height: 48px; flex: none; display: grid; place-items: center; font-size: 12px; margin-bottom: -12px; }
  .light { color: #bbb; }
  .rail .short { width: 16px; margin-top: 5px; }
  .c4 { margin-top: 4px; }
  .rail .s2 { margin-top: 3px; }
  .last { margin-top: 3px; }
  .cell .corner { bottom: 8px; right: 4px; }
  .minibar { height: 17px; background: linear-gradient(#eee, #f3f3f3); display: flex; align-items: center; justify-content: space-between; padding: 0 4px 0 7px; }
  .tick { width: 1px; height: 13px; background: #bbb; }

  footer { height: 40px; flex: none; background: linear-gradient(90deg, #011a21, #011520 50%, #020a18 85%, #020a18); display: flex; color: #fff; }
  .start { width: 48px; display: grid; place-items: center; }
  .search { width: 288px; background: #f1f1f1; border: 1px solid #c9c9c9; border-width: 1px 0; display: flex; align-items: center; padding-left: 12px; }
  .hint { margin-left: 10px; font-size: 14.300px; color: #333; }
  .flowers { margin-left: auto; }
  .apps { display: flex; }
  .apps span { width: 49.500px; display: grid; place-items: center; }
  .apps .edge { padding-left: 2px; }
  .apps .running { width: 48px; background: #33444d; border-bottom: 3px solid #76b9ed; padding-top: 3px; }
  .tray { margin-left: auto; display: flex; }
  .tray span { width: 24px; display: grid; place-items: center; }
  .clock { width: 64px; display: flex; flex-direction: column; align-items: center; font-size: 11.500px; line-height: 18px; padding-top: 2px; }
  .note { width: 40px; display: grid; place-items: center; }
  .peek { width: 1px; background: #49515d; margin: 0 5px 0 7px; }

  .mark { position: absolute; left: 1037px; top: 605px; }
  .marktext { font: 600 51px "Open Sans", sans-serif; }
</style>
